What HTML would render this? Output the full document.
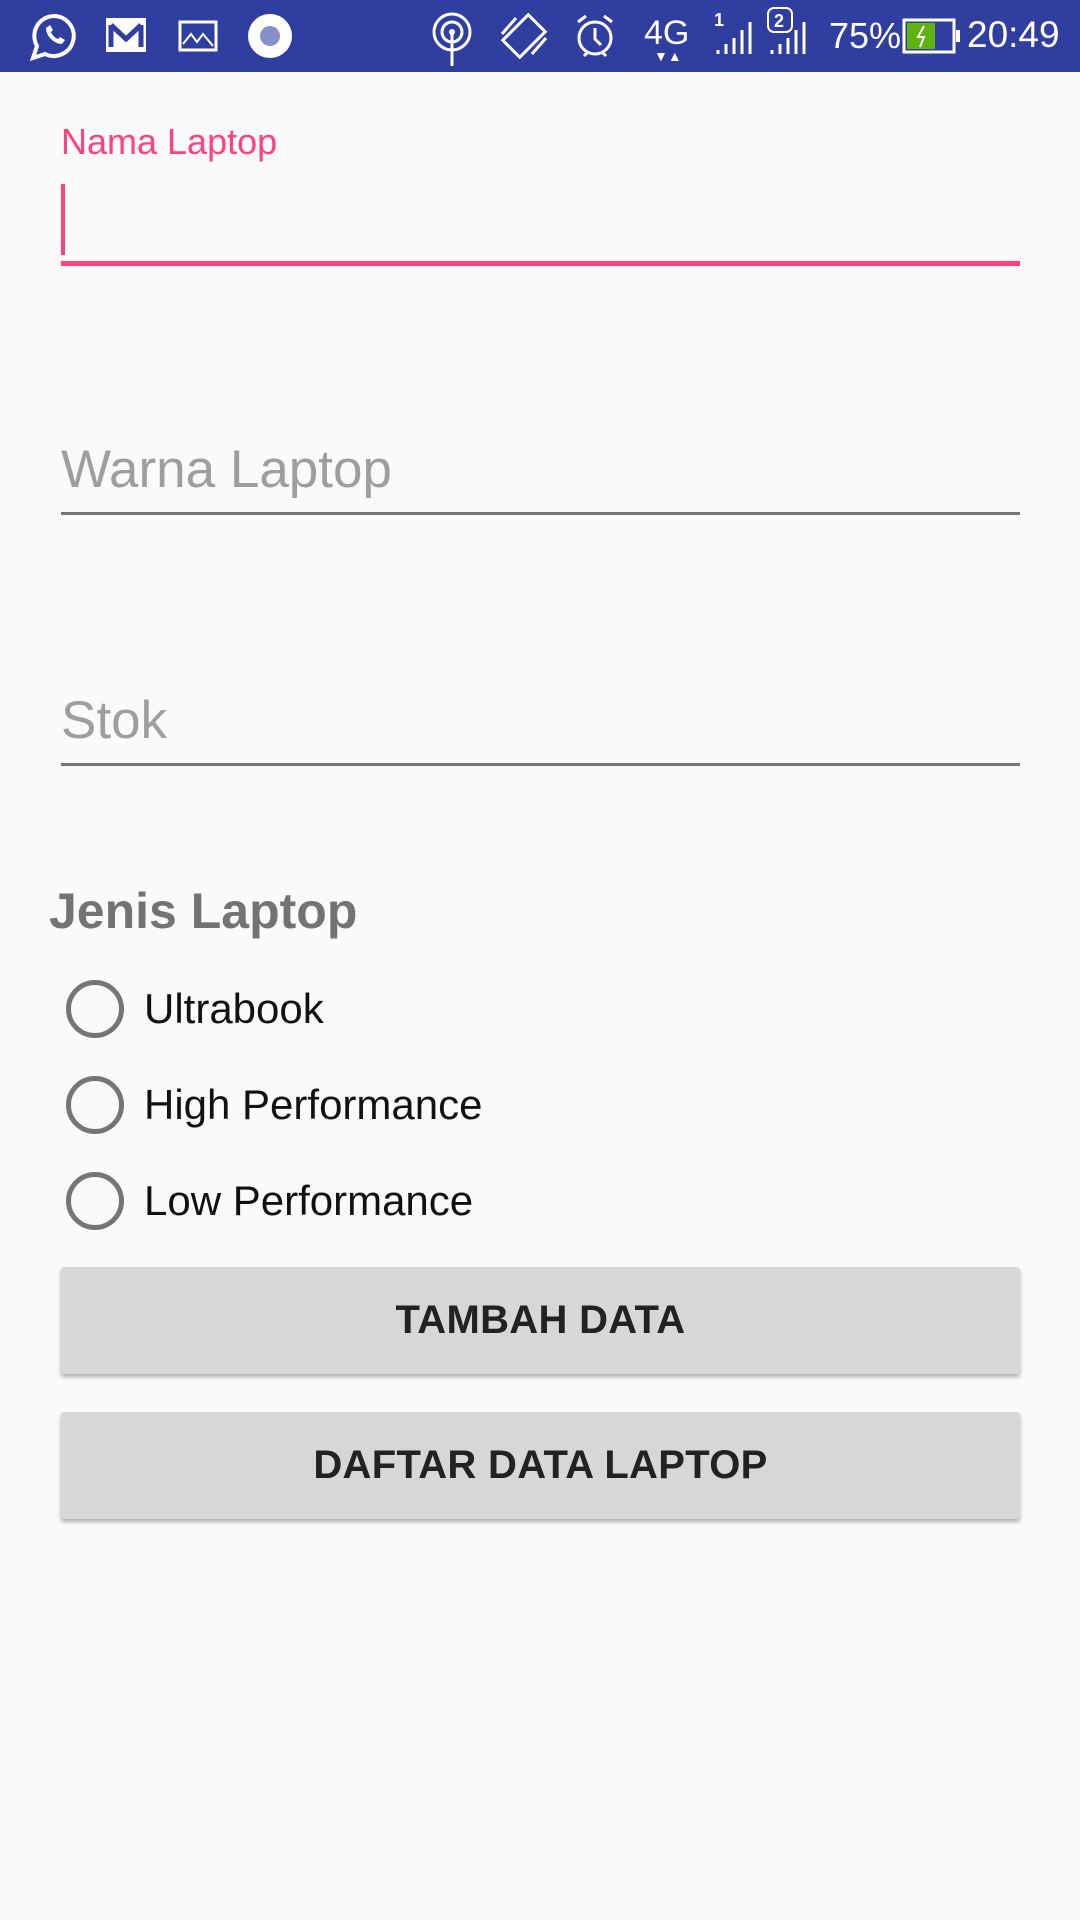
<!DOCTYPE html>
<html><head><meta charset="utf-8"><style>
body{margin:0;width:1080px;height:1920px;background:#fafafa;font-family:"Liberation Sans",sans-serif;position:relative;overflow:hidden}
.a{position:absolute}
.sb{left:0;top:0;width:1080px;height:72px;background:#303f9f;color:#fff}
.line{position:absolute;left:61px;width:959px}
.hint{position:absolute;left:61px;font-size:53px;color:#9e9e9e;line-height:1}
.rad{position:absolute;left:66px;width:58px;height:58px;border:5px solid #757575;border-radius:50%;box-sizing:border-box}
.rt{position:absolute;left:144px;font-size:42px;color:#111;line-height:1}
.btn{position:absolute;left:61px;width:959px;height:107px;background:#d6d7d7;border-radius:3px;box-shadow:0 3px 4px rgba(0,0,0,.3);text-align:center;line-height:107px;font-size:40px;font-weight:bold;color:#222;letter-spacing:0.3px}
</style></head><body>
<div class="a sb">
<svg class="a" style="left:28px;top:12px" width="52" height="50" viewBox="0 0 52 50"><path d="M26 4a20 20 0 0 0-17 30l-4 12 12-4A20 20 0 1 0 26 4z" fill="none" stroke="#fff" stroke-width="4"/><path d="M18 16c0 8 8 16 16 16l3-4-5-3-2 2c-3-1-6-4-7-7l2-2-3-5z" fill="#fff"/></svg>
<svg class="a" style="left:105px;top:17px" width="42" height="36"><rect x="1" y="1" width="40" height="34" fill="#fff"/><path d="M6 8v22M36 8v22M6 8l15 14 15-14" stroke="#303f9f" stroke-width="5" fill="none"/></svg>
<svg class="a" style="left:178px;top:20px" width="40" height="32"><rect x="2" y="2" width="36" height="28" fill="none" stroke="#fff" stroke-width="3"/><path d="M5 24l8-10 6 8 6-8 10 12" stroke="#fff" stroke-width="2" fill="none"/></svg>
<div class="a" style="left:248px;top:14px;width:44px;height:44px;border-radius:50%;background:#fff"></div>
<div class="a" style="left:260px;top:26px;width:20px;height:20px;border-radius:50%;background:#8890c8"></div>
<svg class="a" style="left:430px;top:10px" width="44" height="56"><circle cx="22" cy="22" r="18" fill="none" stroke="#fff" stroke-width="3"/><circle cx="22" cy="22" r="10" fill="none" stroke="#fff" stroke-width="3"/><circle cx="22" cy="22" r="3" fill="#fff"/><path d="M22 22v34" stroke="#fff" stroke-width="3"/></svg>
<svg class="a" style="left:498px;top:12px" width="52" height="48"><rect x="14" y="6" width="24" height="36" transform="rotate(45 26 24)" fill="none" stroke="#fff" stroke-width="3"/><path d="M4 22L18 6M48 26L34 42" stroke="#fff" stroke-width="3"/></svg>
<svg class="a" style="left:574px;top:12px" width="42" height="48"><circle cx="21" cy="26" r="16" fill="none" stroke="#fff" stroke-width="3"/><path d="M21 16v11l6 6M4 10l8-6M38 10l-8-6M10 44l4-4M32 44l-4-4" stroke="#fff" stroke-width="3" fill="none"/></svg>
<div class="a" style="left:644px;top:14px;font-size:34px">4G</div>
<div class="a" style="left:654px;top:48px;font-size:14px">▼▲</div>
<svg class="a" style="left:712px;top:10px" width="44" height="46"><text x="2" y="16" fill="#fff" font-size="18" font-family="Liberation Sans" font-weight="bold">1</text><path d="M6 44v-4M14 44v-10M22 44v-16M30 44v-24M38 44v-32" stroke="#fff" stroke-width="3"/></svg>
<svg class="a" style="left:766px;top:6px" width="52" height="50"><rect x="2" y="2" width="24" height="24" rx="6" fill="none" stroke="#fff" stroke-width="2"/><text x="8" y="21" fill="#fff" font-size="18" font-family="Liberation Sans" font-weight="bold">2</text><path d="M6 48v-4M14 48v-10M22 48v-16M30 48v-24M38 48v-32" stroke="#fff" stroke-width="3"/></svg>
<div class="a" style="left:829px;top:15px;font-size:36px">75%</div>
<svg class="a" style="left:902px;top:18px" width="60" height="36"><rect x="2" y="2" width="50" height="32" fill="none" stroke="#fff" stroke-width="3"/><rect x="5" y="5" width="28" height="26" fill="#5fb30e"/><rect x="54" y="12" width="4" height="12" fill="#fff"/><path d="M22 8l-6 11h6l-4 10" stroke="#fff" stroke-width="2" fill="none"/></svg>
<div class="a" style="left:967px;top:14px;font-size:37px">20:49</div>
</div>

<div class="a" style="left:61px;top:124px;font-size:36px;color:#ff4081;line-height:1">Nama Laptop</div>
<div class="a" style="left:61px;top:184px;width:4px;height:71px;background:#ff4081"></div>
<div class="line" style="top:261px;height:5px;background:#ff4081"></div>

<div class="hint" style="top:443px">Warna Laptop</div>
<div class="line" style="top:512px;height:3px;background:#777"></div>

<div class="hint" style="top:694px">Stok</div>
<div class="line" style="top:763px;height:3px;background:#777"></div>

<div class="a" style="left:49px;top:886px;font-size:50px;font-weight:bold;color:#737373;line-height:1">Jenis Laptop</div>

<div class="rad" style="top:980px"></div><div class="rt" style="top:988px">Ultrabook</div>
<div class="rad" style="top:1076px"></div><div class="rt" style="top:1084px">High Performance</div>
<div class="rad" style="top:1172px"></div><div class="rt" style="top:1180px">Low Performance</div>

<div class="btn" style="top:1267px">TAMBAH DATA</div>
<div class="btn" style="top:1412px">DAFTAR DATA LAPTOP</div>
</body></html>
